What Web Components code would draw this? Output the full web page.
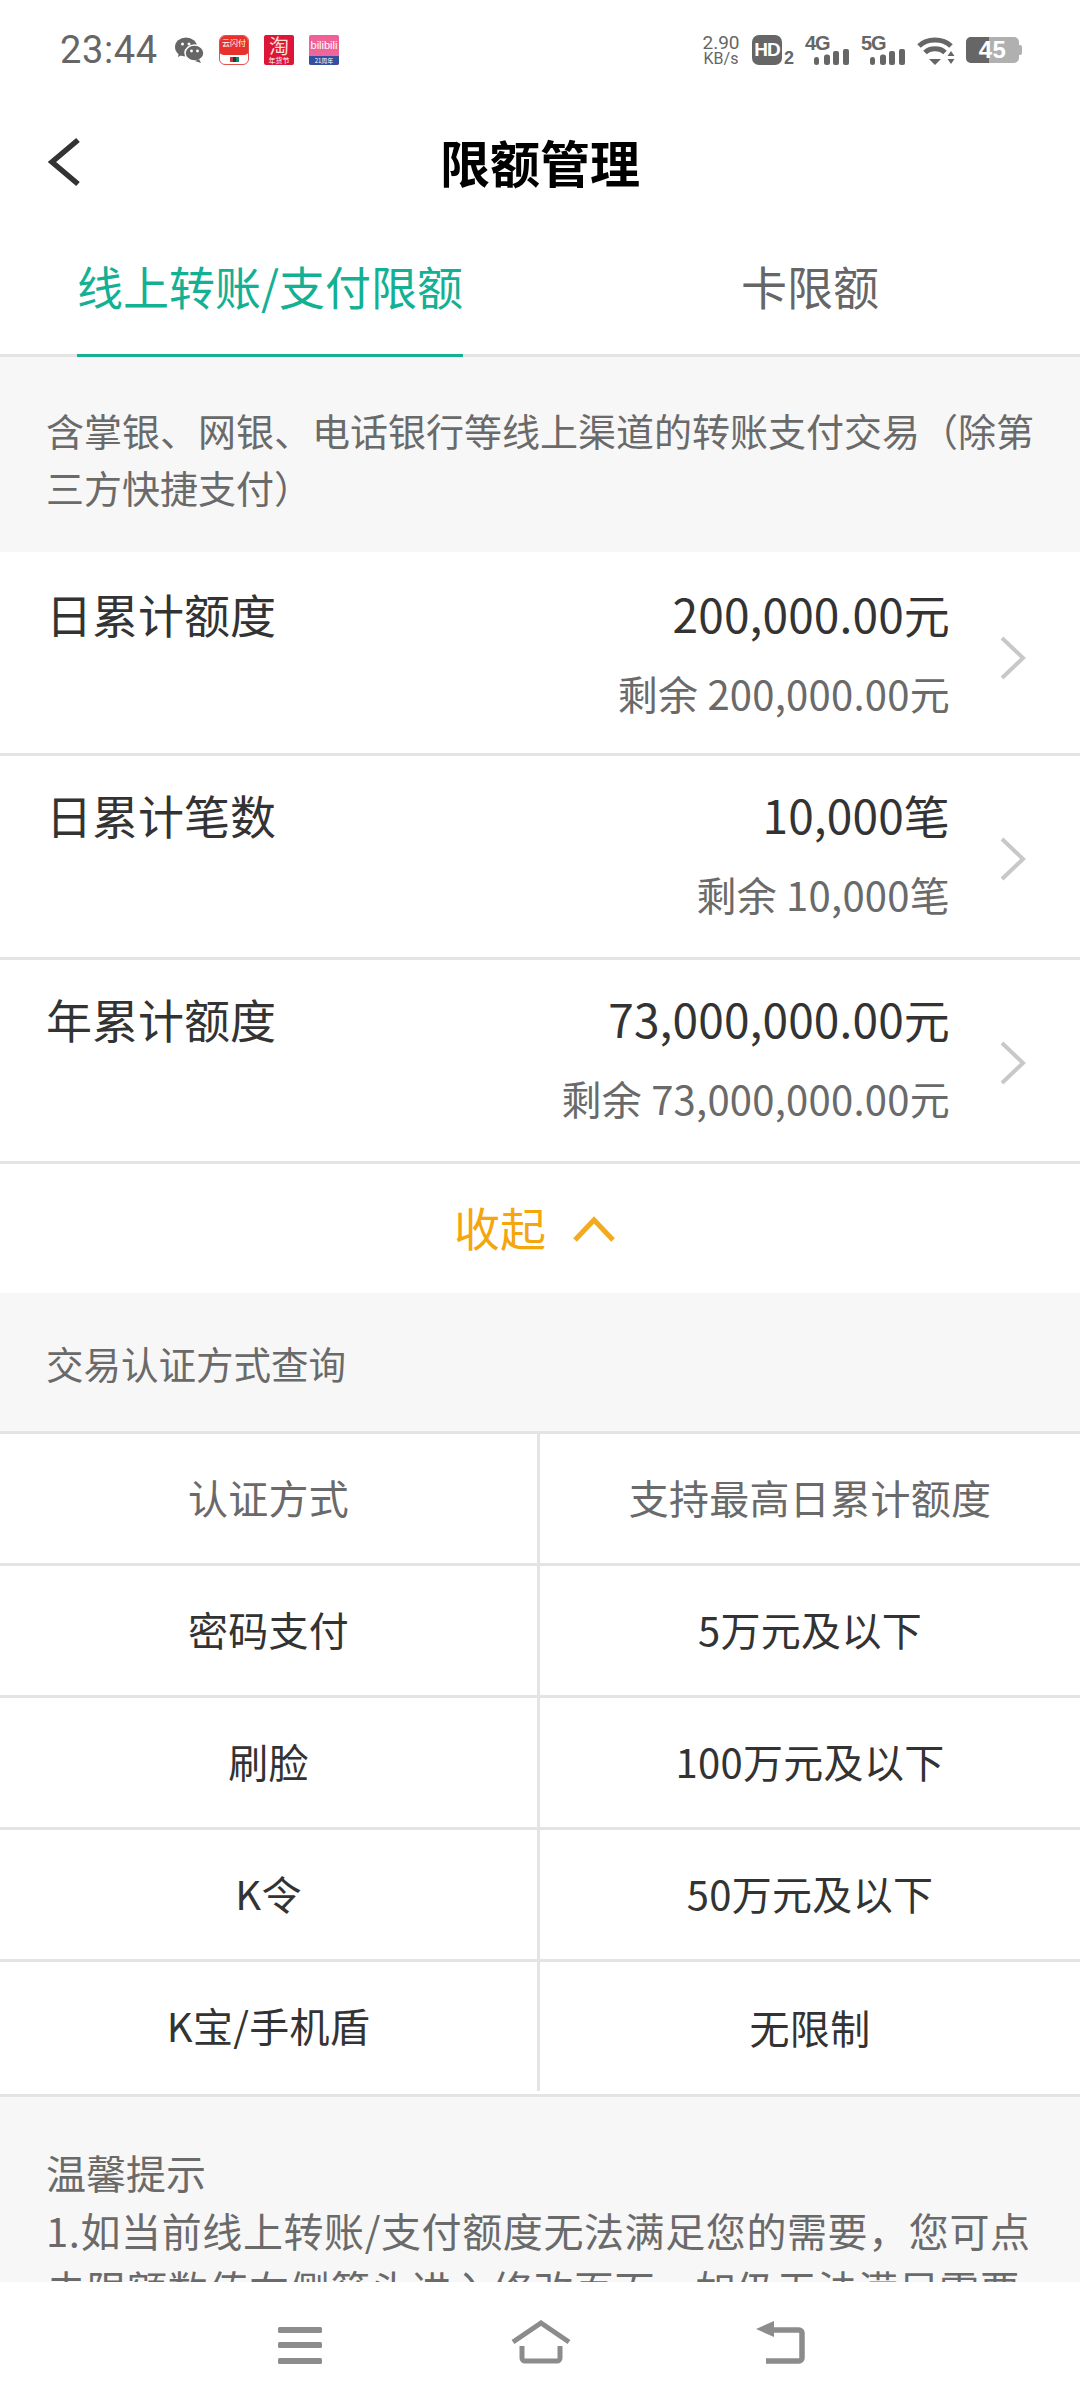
<!DOCTYPE html>
<html lang="zh-CN">
<head>
<meta charset="utf-8">
<title>限额管理</title>
<style>
    html, body { margin: 0; padding: 0; background: #fff; }
    body { font-family: "Noto Sans CJK SC", "Noto Sans", sans-serif; color: #333; }
</style>
</head>
<body>
<app-screen>
    <status-bar slot="top"></status-bar>
    <nav-header slot="top">限额管理</nav-header>
    <tab-bar slot="top">
        <tab-item active>线上转账/支付限额</tab-item>
        <tab-item>卡限额</tab-item>
    </tab-bar>

    <note-block>含掌银、网银、电话银行等线上渠道的转账支付交易（除第三方快捷支付）</note-block>
    <limit-row first>
        <span slot="label">日累计额度</span>
        <span slot="value">200,000.00元</span>
        <span slot="remain">剩余 200,000.00元</span>
    </limit-row>
    <limit-row>
        <span slot="label">日累计笔数</span>
        <span slot="value">10,000笔</span>
        <span slot="remain">剩余 10,000笔</span>
    </limit-row>
    <limit-row>
        <span slot="label">年累计额度</span>
        <span slot="value">73,000,000.00元</span>
        <span slot="remain">剩余 73,000,000.00元</span>
    </limit-row>
    <collapse-toggle>收起</collapse-toggle>
    <section-label>交易认证方式查询</section-label>
    <auth-row head>
        <span slot="method">认证方式</span>
        <span slot="limit">支持最高日累计额度</span>
    </auth-row>
    <auth-row>
        <span slot="method">密码支付</span>
        <span slot="limit">5万元及以下</span>
    </auth-row>
    <auth-row>
        <span slot="method">刷脸</span>
        <span slot="limit">100万元及以下</span>
    </auth-row>
    <auth-row>
        <span slot="method">K令</span>
        <span slot="limit">50万元及以下</span>
    </auth-row>
    <auth-row last>
        <span slot="method">K宝/手机盾</span>
        <span slot="limit">无限制</span>
    </auth-row>
    <tips-block>
        <div>温馨提示</div>
        <div>1.如当前线上转账/支付额度无法满足您的需要，您可点击限额数值右侧箭头进入修改页面，如仍无法满足需要</div>
    </tips-block>

    <soft-keys slot="bottom"></soft-keys>
</app-screen>

<script>
    (function () {
        'use strict';

        customElements.define('app-screen', class extends HTMLElement {
            constructor() {
                super();
                this.attachShadow({mode: 'open'}).innerHTML = `
                    <style>
                        :host {
                            display: flex;
                            flex-direction: column;
                            width: 1080px;
                            height: 2408px;
                            overflow: hidden;
                            background: #fff;
                        }
                        .scroll {
                            flex: 1;
                            min-height: 0;
                            overflow: hidden;
                            background: #f7f7f7;
                        }
                    </style>
                    <slot name="top"></slot>
                    <div class="scroll"><slot></slot></div>
                    <slot name="bottom"></slot>
                `;
            }
        });

        customElements.define('status-bar', class extends HTMLElement {
            constructor() {
                super();
                this.attachShadow({mode: 'open'}).innerHTML = `
                    <style>
                        :host {
                            display: flex;
                            align-items: center;
                            justify-content: space-between;
                            height: 90px;
                            padding: 10px 58px 0 60px;
                            box-sizing: border-box;
                            color: #666;
                            font-family: Roboto, "Liberation Sans", sans-serif;
                        }
                        .side { display: flex; align-items: center; }
                        .time { font-size: 38px; letter-spacing: 0.6px; line-height: 44px; width: 115px; }
                        svg { display: block; }
                        .app {
                            width: 30px;
                            height: 30px;
                            margin-left: 15px;
                            display: flex;
                            flex-direction: column;
                            align-items: center;
                            font-family: "Noto Sans CJK SC", sans-serif;
                            color: #fff;
                            border-radius: 3px;
                        }
                        .app span { display: block; white-space: nowrap; }
                        .pay { background: #fff; border: 1px solid #e2504f; box-sizing: border-box; border-radius: 6px; }
                        .pay .top { width: 100%; height: 19px; background: #e8312c; font-size: 8px; line-height: 14px; text-align: center; border-radius: 5px 5px 6px 6px / 5px 5px 2px 2px; }
                        .pay .mini { width: 9px; height: 5px; margin-top: 2px; background: linear-gradient(90deg, #c33 0 33%, #235 33% 66%, #186 66%); }
                        .tao { background: #dd1537; border-radius: 2px; display: block; text-align: center; white-space: pre-line; font-size: 7px; line-height: 9px; }
                        .tao::first-line { font-size: 20px; line-height: 21px; color: #fbdcd2; }
                        .bili { background: linear-gradient(#ef5f95, #ee6a9f); border-radius: 2px; }
                        .bili .big { font-size: 11px; line-height: 21px; height: 21px; font-family: "Liberation Sans", sans-serif; }
                        .bili .small { width: 100%; height: 9px; background: #33509f; font-size: 6px; line-height: 9px; text-align: center; border-radius: 0 0 2px 2px; }
                        .speed { width: 38px; height: 32px; margin-right: 12px; text-align: center; white-space: pre-line; font-size: 16px; line-height: 15px; }
                        .speed::first-line { font-size: 19px; line-height: 17px; }
                        .hd {
                            width: 30px; height: 30px; background: #666; color: #fff; border-radius: 7px;
                            font: 700 19px/30px "Liberation Sans", sans-serif; text-align: center; letter-spacing: -1px;
                        }
                        .sub { font: 700 18px/16px "Liberation Sans", sans-serif; align-self: flex-end; margin: 0 11px 0 2px; width: 10px; }
                        .net { position: relative; width: 45px; height: 30px; margin-right: 11px; }
                        .net span { position: absolute; left: 0; top: -1px; font: 700 20px/18px "Liberation Sans", sans-serif; letter-spacing: -1px; }
                        .net svg { position: absolute; left: 9px; bottom: 0; }
                        .batt { position: relative; display: flex; margin-left: 11px; width: 53px; height: 26px; border-radius: 5px; overflow: hidden; background: #b0b0b0; }
                        .batt i { width: 23px; background: #666; }
                        .batt span {
                            position: absolute; inset: 0; text-align: center; color: #fff;
                            font: 700 24px/26px "Liberation Sans", sans-serif; letter-spacing: 0.5px;
                        }
                        .tip { width: 3px; height: 10px; background: #b0b0b0; border-radius: 0 2px 2px 0; }
                    </style>
                    <div class="side">
                        <span class="time">23:44</span>
                        <svg width="29" height="26" viewBox="0 0 29 26" fill="#666">
                            <ellipse cx="11" cy="10" rx="11" ry="9.5"/>
                            <path d="M4 15l-1 5 6-3z"/>
                            <ellipse cx="19.5" cy="16" rx="9.5" ry="8" stroke="#fff" stroke-width="1.5"/>
                            <path d="M24 22l2 4-6-2z"/>
                            <circle cx="7.5" cy="7" r="1.5" fill="#fff"/>
                            <circle cx="14" cy="7" r="1.5" fill="#fff"/>
                            <circle cx="16.5" cy="14" r="1.4" fill="#fff"/>
                            <circle cx="22.5" cy="14" r="1.4" fill="#fff"/>
                        </svg>
                        <div class="app pay"><span class="top">云闪付</span><span class="mini"></span></div>
                        <div class="app tao">淘
年货节</div>
                        <div class="app bili"><span class="big">bilibili</span><span class="small">21周年</span></div>
                    </div>
                    <div class="side">
                        <div class="speed">2.90
KB/s</div>
                        <div class="hd">HD</div>
                        <div class="sub">2</div>
                        <div class="net"><span>4G</span><svg width="36" height="16" fill="#666"><rect x="0" y="8" width="5" height="8" rx="2.5"/><rect x="10" y="5.500" width="6" height="10.500" rx="2.500"/><rect x="19" y="2" width="6" height="14" rx="2"/><rect x="29" y="0" width="6" height="16" rx="2"/></svg></div>
                        <div class="net"><span>5G</span><svg width="36" height="16" fill="#666"><rect x="0" y="8" width="5" height="8" rx="2.5"/><rect x="10" y="5.500" width="6" height="10.500" rx="2.500"/><rect x="19" y="2" width="6" height="14" rx="2"/><rect x="29" y="0" width="6" height="16" rx="2"/></svg></div>
                        <svg width="38" height="30" viewBox="0 0 38 30" fill="none" stroke="#666">
                            <path d="M2 11c8-8 24-8 32 0" stroke-width="5"/>
                            <path d="M8 17.500c5-5 15-5 20 0" stroke-width="5"/>
                            <path d="M12 24h12l-6 6z" fill="#666" stroke="none"/>
                            <path d="M34 16l3.500 5h-7zM30.500 24h7l-3.500 5z" fill="#666" stroke="none"/>
                        </svg>
                        <div class="batt"><i></i><span>45</span></div>
                        <div class="tip"></div>
                    </div>
                `;
            }
        });

        customElements.define('nav-header', class extends HTMLElement {
            constructor() {
                super();
                this.attachShadow({mode: 'open'}).innerHTML = `
                    <style>
                        :host {
                            display: grid;
                            grid-template-columns: 1fr auto 1fr;
                            align-items: center;
                            height: 146px;
                            box-sizing: border-box;
                        }
                        svg { display: block; margin: 0 0 2px 47px; }
                        .title { font-size: 50px; font-weight: 700; color: #000; line-height: 142px; margin-bottom: 4px; }
                    </style>
                    <svg width="34" height="50" viewBox="0 0 34 50" fill="none" stroke="#333" stroke-width="5.500">
                        <path d="M31 3L5 25l26 22"/>
                    </svg>
                    <div class="title"><slot></slot></div>
                    <span></span>
                `;
            }
        });

        customElements.define('tab-bar', class extends HTMLElement {
            constructor() {
                super();
                this.attachShadow({mode: 'open'}).innerHTML = `
                    <style>
                        :host {
                            display: grid;
                            grid-template-columns: 1fr 1fr;
                            justify-items: center;
                            height: 121px;
                            box-sizing: border-box;
                            border-bottom: 3px solid #e4e4e4;
                        }
                    </style>
                    <slot></slot>
                `;
            }
        });

        customElements.define('tab-item', class extends HTMLElement {
            constructor() {
                super();
                this.attachShadow({mode: 'open'}).innerHTML = `
                    <style>
                        :host {
                            display: block;
                            height: 121px;
                            box-sizing: border-box;
                            font-size: 46px;
                            line-height: 99px;
                            color: #666;
                        }
                        :host([active]) {
                            color: #14b093;
                            border-bottom: 3px solid #14b093;
                        }
                    </style>
                    <slot></slot>
                `;
            }
        });

        customElements.define('note-block', class extends HTMLElement {
            constructor() {
                super();
                this.attachShadow({mode: 'open'}).innerHTML = `
                    <style>
                        :host {
                            display: block;
                            padding: 44px 40px 37px 46px;
                            font-size: 38px;
                            line-height: 57px;
                            color: #6a6a6a;
                            background: #f7f7f7;
                        }
                    </style>
                    <slot></slot>
                `;
            }
        });

        customElements.define('limit-row', class extends HTMLElement {
            constructor() {
                super();
                this.attachShadow({mode: 'open'}).innerHTML = `
                    <style>
                        :host {
                            display: grid;
                            grid-template-columns: 1fr auto 130px;
                            height: 204px;
                            box-sizing: border-box;
                            padding: 26px 0 0 46px;
                            background: #fff;
                            border-bottom: 3px solid #e4e4e4;
                        }
                        :host([first]) { padding-top: 29px; }
                        .label { font-size: 46px; line-height: 64px; color: #333; }
                        .nums { text-align: right; }
                        .value { font-size: 46px; line-height: 64px; color: #333; letter-spacing: 0.15px; }
                        .remain { font-size: 40px; line-height: 56px; margin-top: 20px; color: #6a6a6a; letter-spacing: 0.25px; }
                        svg { display: block; margin: 55px 0 0 50px; }
                    </style>
                    <div class="label"><slot name="label"></slot></div>
                    <div class="nums">
                        <div class="value"><slot name="value"></slot></div>
                        <div class="remain"><slot name="remain"></slot></div>
                    </div>
                    <svg width="26" height="44" viewBox="0 0 26 44" fill="none" stroke="#c8c8c8" stroke-width="4">
                        <path d="M2 2l21 20L2 42"/>
                    </svg>
                `;
            }
        });

        customElements.define('collapse-toggle', class extends HTMLElement {
            constructor() {
                super();
                this.attachShadow({mode: 'open'}).innerHTML = `
                    <style>
                        :host {
                            display: flex;
                            align-items: center;
                            height: 129px;
                            padding-left: 454px;
                            box-sizing: border-box;
                            background: #fff;
                            font-size: 46px;
                            color: #f5a60d;
                        }
                        span { margin-bottom: 6px; }
                        svg { display: block; margin-left: 26px; }
                    </style>
                    <span><slot></slot></span>
                    <svg width="44" height="28" viewBox="0 0 44 28" fill="none" stroke="#f2ab1f" stroke-width="5">
                        <path d="M3 25L22 5l19 20"/>
                    </svg>
                `;
            }
        });

        customElements.define('section-label', class extends HTMLElement {
            constructor() {
                super();
                this.attachShadow({mode: 'open'}).innerHTML = `
                    <style>
                        :host {
                            display: flex;
                            align-items: center;
                            height: 141px;
                            padding: 0 0 0 46px;
                            box-sizing: border-box;
                            font-size: 37.500px;
                            color: #6a6a6a;
                            background: #f7f7f7;
                            border-bottom: 3px solid #e4e4e4;
                        }
                    </style>
                    <slot></slot>
                `;
            }
        });

        customElements.define('auth-row', class extends HTMLElement {
            constructor() {
                super();
                this.attachShadow({mode: 'open'}).innerHTML = `
                    <style>
                        :host {
                            display: grid;
                            grid-template-columns: 540px 540px;
                            height: 132px;
                            box-sizing: border-box;
                            background: #fff;
                            border-bottom: 3px solid #e4e4e4;
                            font-size: 40px;
                            letter-spacing: 0.3px;
                            color: #333;
                        }
                        :host([head]) { color: #6a6a6a; }
                        :host([last]) { height: 135px; }
                        :host([last]) .method { margin-bottom: 3px; }
                        div { display: flex; align-items: center; justify-content: center; padding-bottom: 3px; box-sizing: border-box; }
                        .method { border-right: 3px solid #e4e4e4; }
                    </style>
                    <div class="method"><slot name="method"></slot></div>
                    <div><slot name="limit"></slot></div>
                `;
            }
        });

        customElements.define('tips-block', class extends HTMLElement {
            constructor() {
                super();
                this.attachShadow({mode: 'open'}).innerHTML = `
                    <style>
                        :host {
                            display: block;
                            padding: 46px 46px 40px 46px;
                            font-size: 40px;
                            line-height: 58px;
                            color: #6a6a6a;
                            background: #f7f7f7;
                        }
                        ::slotted(div:last-child) { letter-spacing: 0.6px; }
                    </style>
                    <slot></slot>
                `;
            }
        });

        customElements.define('soft-keys', class extends HTMLElement {
            constructor() {
                super();
                this.attachShadow({mode: 'open'}).innerHTML = `
                    <style>
                        :host {
                            display: grid;
                            grid-template-columns: 233px 245px 50px;
                            height: 126px;
                            box-sizing: border-box;
                            padding: 38px 0 0 278px;
                            background: #fff;
                        }
                        svg { display: block; }
                    </style>
                    <svg width="44" height="44" viewBox="0 0 44 44" fill="#8c8c8c">
                        <rect x="0" y="7" width="44" height="6" rx="1.500"/>
                        <rect x="0" y="22" width="44" height="6" rx="1.500"/>
                        <rect x="0" y="38" width="44" height="6" rx="1.500"/>
                    </svg>
                    <svg width="60" height="44" viewBox="0 0 60 44" fill="none" stroke="#8c8c8c" stroke-width="5">
                        <path d="M2 22L30 3l28 19"/>
                        <path d="M11 26v12a3 3 0 0 0 3 3h32a3 3 0 0 0 3-3V26"/>
                    </svg>
                    <svg width="50" height="44" viewBox="0 0 50 44" fill="none" stroke="#8c8c8c" stroke-width="5.500">
                        <path d="M14 10h29a3 3 0 0 1 3 3v25a3 3 0 0 1-3 3H10"/>
                        <path d="M18 1v16L0 9z" fill="#8c8c8c" stroke="none"/>
                    </svg>
                `;
            }
        });
    })();
</script>
</body>
</html>
